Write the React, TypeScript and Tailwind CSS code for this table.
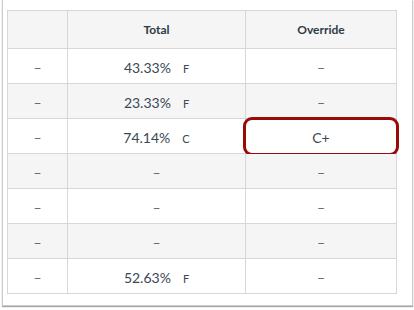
const rows = [
  { total: '43.33%', letter: 'F', override: null },
  { total: '23.33%', letter: 'F', override: null },
  { total: '74.14%', letter: 'C', override: 'C+' },
  { total: null, letter: null, override: null },
  { total: null, letter: null, override: null },
  { total: null, letter: null, override: null },
  { total: '52.63%', letter: 'F', override: null },
];

function Dash() {
  return <span className="text-[14px] text-[#5b666e]">–</span>;
}

export default function App() {
  return (
    <div className="h-[310px] w-[414px] bg-white font-['Lato','Open_Sans',sans-serif] text-[#2d3b45]">
      <div className="ml-[2px] h-[306px] w-[411px] border-x border-b border-[#c9cccf] bg-white pl-[4px] pt-[10px] shadow-[0_1px_1px_rgba(0,0,0,0.35)]">
        <div className="grid w-[390px] grid-cols-[60px_178px_151px] border-l border-t border-[#d4d8da]">
          {/* Header */}
          <div className="h-[38px] border-b border-r border-[#d4d8da] bg-[#f5f5f5]" />
          <div className="flex h-[38px] items-center justify-center border-b border-r border-[#d4d8da] bg-[#f5f5f5] text-[12px] font-bold">
            Total
          </div>
          <div className="flex h-[38px] items-center justify-center border-b border-r border-[#d4d8da] bg-[#f5f5f5] text-[12px] font-bold">
            Override
          </div>

          {rows.map((r, i) => {
            const bg = i % 2 === 1 ? 'bg-[#f5f5f5]' : 'bg-white';
            return [
              <div
                key={`a${i}`}
                className={`flex h-[35px] items-center justify-center border-b border-r border-[#d4d8da] pt-[2px] ${bg}`}
              >
                <Dash />
              </div>,
              <div
                key={`b${i}`}
                className={`flex h-[35px] items-center justify-center border-b border-r border-[#d4d8da] pt-[2px] ${bg}`}
              >
                {r.total ? (
                  <span className="flex items-baseline gap-[12px] text-[#3a4852]">
                    <span className="text-[14px]">{r.total}</span>
                    <span className="text-[11px]">{r.letter}</span>
                  </span>
                ) : (
                  <Dash />
                )}
              </div>,
              <div
                key={`c${i}`}
                className={`relative flex h-[35px] items-center justify-center border-b border-r border-[#d4d8da] pt-[2px] ${bg}`}
              >
                {r.override ? (
                  <>
                    <span className="text-[14px] text-[#3a4852]">{r.override}</span>
                    <div className="absolute -bottom-[3px] -left-[3px] -right-[3px] -top-[2px] rounded-[9px] border-[3px] border-[#990a0a]" />
                  </>
                ) : (
                  <Dash />
                )}
              </div>,
            ];
          })}
        </div>
      </div>
    </div>
  );
}
